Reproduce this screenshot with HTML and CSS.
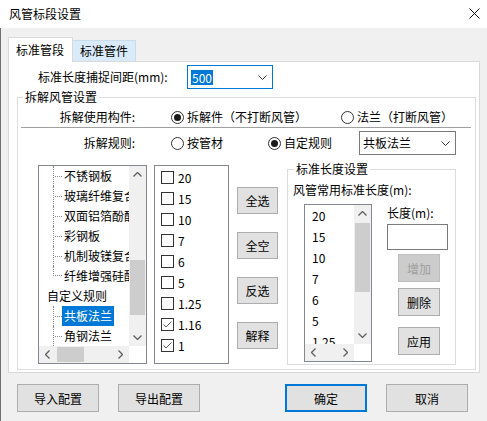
FILE: index.html
```html
<!DOCTYPE html>
<html lang="zh-CN">
<head>
    <meta charset="UTF-8">
    <title>风管标段设置</title>
    <link rel="stylesheet" href="styles.css">
</head>
<body>
<div class="window">
    <div class="titlebar">
        <span class="title">风管标段设置</span>
        <svg class="close" width="11" height="11" viewBox="0 0 11 11"><path d="M0.5 0.5L10.5 10.5M10.5 0.5L0.5 10.5" stroke="#111" stroke-width="1"/></svg>
    </div>
    <div class="client">
        <div class="tabs">
            <div class="tab active">标准管段</div>
            <div class="tab">标准管件</div>
        </div>
        <div class="panel">
            <div class="snap-row">
                <label class="snap-label">标准长度捕捉间距(mm):</label>
                <div class="combo focus">
                    <span class="sel">500</span>
                    <svg class="chev" width="9" height="5" viewBox="0 0 9 5"><path d="M0.5 0.5L4.5 4.5L8.5 0.5" fill="none" stroke="#333"/></svg>
                </div>
            </div>

            <fieldset class="group main-group">
                <legend>拆解风管设置</legend>
                <div class="opt-row">
                    <span class="opt-label">拆解使用构件:</span>
                    <span class="radio-item w170"><span class="radio on"></span>拆解件（不打断风管）</span>
                    <span class="radio-item"><span class="radio"></span>法兰（打断风管）</span>
                </div>
                <div class="separator"></div>
                <div class="opt-row rule-row">
                    <span class="opt-label">拆解规则:</span>
                    <span class="radio-item w97"><span class="radio"></span>按管材</span>
                    <span class="radio-item w91"><span class="radio on"></span>自定规则</span>
                    <div class="combo rule-combo">
                        <span>共板法兰</span>
                        <svg class="chev" width="9" height="5" viewBox="0 0 9 5"><path d="M0.5 0.5L4.5 4.5L8.5 0.5" fill="none" stroke="#333"/></svg>
                    </div>
                </div>

                <div class="work">
                    <div class="tree box">
                        <div class="tree-body">
                            <div class="tree-items">
                                <div class="node child"><span class="guide"></span><span class="txt">不锈钢板</span></div>
                                <div class="node child"><span class="guide"></span><span class="txt">玻璃纤维复合风管</span></div>
                                <div class="node child"><span class="guide"></span><span class="txt">双面铝箔酚醛风管</span></div>
                                <div class="node child"><span class="guide"></span><span class="txt">彩钢板</span></div>
                                <div class="node child"><span class="guide"></span><span class="txt">机制玻镁复合风管</span></div>
                                <div class="node child last"><span class="guide"></span><span class="txt">纤维增强硅酸盐风管</span></div>
                                <div class="node root"><span class="txt">自定义规则</span></div>
                                <div class="node child"><span class="guide"></span><span class="txt picked">共板法兰</span></div>
                                <div class="node child"><span class="guide"></span><span class="txt">角钢法兰</span></div>
                            </div>
                            <div class="vscroll">
                                <svg class="arrow" width="9" height="5" viewBox="0 0 9 5"><path d="M0.5 4.5L4.5 0.5L8.5 4.5" fill="none" stroke="#606060" stroke-width="1.3"/></svg>
                                <div class="track tree-track"><div class="thumb"></div></div>
                                <svg class="arrow" width="9" height="5" viewBox="0 0 9 5"><path d="M0.5 0.5L4.5 4.5L8.5 0.5" fill="none" stroke="#606060" stroke-width="1.3"/></svg>
                            </div>
                        </div>
                        <div class="hscroll-row">
                            <div class="hscroll">
                                <svg class="arrow" width="5" height="9" viewBox="0 0 5 9"><path d="M4.5 0.5L0.5 4.5L4.5 8.5" fill="none" stroke="#606060" stroke-width="1.3"/></svg>
                                <div class="htrack"><div class="hthumb"></div></div>
                                <svg class="arrow" width="5" height="9" viewBox="0 0 5 9"><path d="M0.5 0.5L4.5 4.5L0.5 8.5" fill="none" stroke="#606060" stroke-width="1.3"/></svg>
                            </div>
                            <div class="corner"></div>
                        </div>
                    </div>

                    <div class="checklist box">
                        <div class="check-item"><span class="check"></span>20</div>
                        <div class="check-item"><span class="check"></span>15</div>
                        <div class="check-item"><span class="check"></span>10</div>
                        <div class="check-item"><span class="check"></span>7</div>
                        <div class="check-item"><span class="check"></span>6</div>
                        <div class="check-item"><span class="check"></span>5</div>
                        <div class="check-item"><span class="check"></span>1.25</div>
                        <div class="check-item"><span class="check"><svg width="11" height="11" viewBox="0 0 11 11"><path d="M1.5 5.5L4 8L9.5 2.5" fill="none" stroke="#5a5a5a"/></svg></span>1.16</div>
                        <div class="check-item"><span class="check"><svg width="11" height="11" viewBox="0 0 11 11"><path d="M1.5 5.5L4 8L9.5 2.5" fill="none" stroke="#5a5a5a"/></svg></span>1</div>
                    </div>

                    <div class="btn-col">
                        <button class="btn small">全选</button>
                        <button class="btn small">全空</button>
                        <button class="btn small">反选</button>
                        <button class="btn small">解释</button>
                    </div>

                    <fieldset class="group len-group">
                        <legend>标准长度设置</legend>
                        <div class="len-title">风管常用标准长度(m):</div>
                        <div class="len-body">
                            <div class="listbox box">
                                <div class="list-body">
                                    <div class="list-items">
                                        <div class="list-item">20</div>
                                        <div class="list-item">15</div>
                                        <div class="list-item">10</div>
                                        <div class="list-item">7</div>
                                        <div class="list-item">6</div>
                                        <div class="list-item">5</div>
                                        <div class="list-item">1.25</div>
                                    </div>
                                    <div class="vscroll">
                                        <svg class="arrow" width="9" height="5" viewBox="0 0 9 5"><path d="M0.5 4.5L4.5 0.5L8.5 4.5" fill="none" stroke="#606060" stroke-width="1.3"/></svg>
                                        <div class="track list-track"><div class="thumb"></div></div>
                                        <svg class="arrow" width="9" height="5" viewBox="0 0 9 5"><path d="M0.5 0.5L4.5 4.5L8.5 0.5" fill="none" stroke="#606060" stroke-width="1.3"/></svg>
                                    </div>
                                </div>
                                <div class="hscroll-row">
                                    <div class="hscroll">
                                        <svg class="arrow" width="5" height="9" viewBox="0 0 5 9"><path d="M4.5 0.5L0.5 4.5L4.5 8.5" fill="none" stroke="#606060" stroke-width="1.3"/></svg>
                                        <div class="htrack"></div>
                                        <svg class="arrow" width="5" height="9" viewBox="0 0 5 9"><path d="M0.5 0.5L4.5 4.5L0.5 8.5" fill="none" stroke="#606060" stroke-width="1.3"/></svg>
                                    </div>
                                    <div class="corner"></div>
                                </div>
                            </div>
                            <div class="len-side">
                                <div class="len-label">长度(m):</div>
                                <div class="textbox"></div>
                                <button class="btn side disabled">增加</button>
                                <button class="btn side del">删除</button>
                                <button class="btn side apply">应用</button>
                            </div>
                        </div>
                    </fieldset>
                </div>
            </fieldset>
        </div>

        <div class="footer">
            <button class="btn wide">导入配置</button>
            <button class="btn wide">导出配置</button>
            <button class="btn wide default">确定</button>
            <button class="btn wide">取消</button>
        </div>
    </div>
</div>
</body>
</html>
```

FILE: styles.css
```css
html, body {
    margin: 0;
    padding: 0;
}
body {
    width: 487px;
    height: 421px;
    overflow: hidden;
    background: #f0f0f0;
    font-family: "Noto Sans CJK SC", "Noto Sans", sans-serif;
    font-size: 12px;
    line-height: 16px;
    color: #000;
}
.window {
    height: 421px;
}
.titlebar {
    height: 28px;
    background: #ffffff;
    display: flex;
    align-items: center;
    padding-left: 9px;
    padding-right: 7px;
    box-sizing: border-box;
}
.title {
    flex: 1;
    font-size: 12px;
    margin-top: -1px;
}
.close {
    margin-top: -2px;
}
.client {
    height: 393px;
    border-left: 1px solid #707070;
    box-sizing: border-box;
    padding-top: 9px;
    padding-left: 7px;
}

/* tabs */
.tabs {
    display: flex;
    align-items: flex-end;
    height: 24px;
}
.tab {
    height: 21px;
    box-sizing: border-box;
    padding: 0 7px;
    line-height: 20px;
    background: #d9eaf9;
    border: 1px solid #c8dcee;
    border-bottom: none;
    border-left: none;
}
.tab.active {
    position: relative;
    z-index: 1;
    height: 25px;
    margin-bottom: -1px;
    padding: 2px 8px 0 7px;
    background: #ffffff;
    border: 1px solid #d9d9d9;
    border-bottom: none;
    line-height: 20px;
}
.panel {
    width: 472px;
    height: 312px;
    box-sizing: border-box;
    background: #ffffff;
    border: 1px solid #d9d9d9;
    padding-top: 3px;
}

/* first row */
.snap-row {
    display: flex;
    align-items: center;
    padding-left: 29px;
}
.snap-label {
    width: 149px;
}
.combo {
    height: 24px;
    box-sizing: border-box;
    border: 1px solid #7a7a7a;
    background: #fff;
    display: flex;
    align-items: center;
    padding-left: 3px;
    padding-right: 4px;
}
.combo > span {
    flex: 1;
}
.combo.focus {
    width: 86px;
    border-color: #0078d7;
}
.combo .sel {
    flex: none;
    background: #0078d7;
    color: #fff;
    padding: 0 1px;
    line-height: 15px;
    margin-right: auto;
}
.chev {
    flex: none;
    margin-right: 1px;
}

/* group boxes */
.group {
    margin: 0;
    padding: 0;
    min-width: 0;
    border: 1px solid #dcdcdc;
}
.group legend {
    padding: 0 2px;
    line-height: 16px;
}
.main-group {
    margin: 0 3px 0 8px;
    height: 281px;
    box-sizing: border-box;
    padding-top: 2px;
}
.main-group > legend {
    margin-left: 5px;
}
.opt-row {
    display: flex;
    align-items: center;
    height: 20px;
}
.opt-label {
    width: 117px;
    text-align: right;
    margin-right: 36px;
}
.radio-item {
    display: flex;
    align-items: center;
}
.w170 { width: 170px; }
.w97 { width: 97px; }
.w91 { width: 91px; }
.radio {
    width: 13px;
    height: 13px;
    box-sizing: border-box;
    border: 1px solid #333;
    border-radius: 50%;
    margin-right: 3px;
    display: flex;
    align-items: center;
    justify-content: center;
    background: #fff;
}
.radio.on::after {
    content: "";
    width: 7px;
    height: 7px;
    border-radius: 50%;
    background: #1a1a1a;
}
.separator {
    height: 1px;
    background: #a0a0a0;
    margin: 0 4px 0 3px;
}
.rule-row {
    height: 24px;
    margin-top: 3px;
}
.rule-combo {
    width: 97px;
}

/* work area */
.work {
    display: flex;
    align-items: flex-start;
    margin-top: 10px;
    padding-left: 20px;
}
.box {
    border: 1px solid #828790;
    background: #fff;
    box-sizing: border-box;
}
.tree {
    width: 109px;
    height: 199px;
    display: flex;
    flex-direction: column;
}
.tree-body, .list-body {
    flex: 1;
    display: flex;
    min-height: 0;
}
.tree-items, .list-items {
    flex: 1;
    overflow: hidden;
    min-width: 0;
}
.node {
    height: 20px;
    display: flex;
    align-items: center;
    white-space: nowrap;
}
.node.root {
    padding-left: 6px;
}
.node.child {
    padding-left: 14px;
}
.guide {
    flex: none;
    width: 9px;
    height: 20px;
    box-sizing: border-box;
    border-left: 1px dotted #8a8a8a;
    display: flex;
    align-items: center;
}
.guide::after {
    content: "";
    width: 8px;
    border-top: 1px dotted #8a8a8a;
    margin-left: 1px;
}
.node.last .guide {
    height: 10px;
    align-self: flex-start;
    align-items: flex-end;
}
.txt {
    padding: 0 2px;
    line-height: 20px;
}
.txt.picked {
    background: #0078d7;
    color: #fff;
}
.vscroll {
    width: 17px;
    background: #f0f0f0;
    display: flex;
    flex-direction: column;
    align-items: center;
    flex: none;
}
.vscroll .arrow {
    margin: 6px 0;
    flex: none;
}
.track {
    flex: 1;
    width: 100%;
    display: flex;
    flex-direction: column;
}
.thumb {
    background: #cdcdcd;
    margin: 0 1px;
}
.tree-track .thumb {
    margin-top: 77px;
    height: 55px;
}
.list-track .thumb {
    margin-top: 1px;
    height: 69px;
}
.hscroll-row {
    height: 17px;
    display: flex;
    flex: none;
}
.hscroll {
    flex: 1;
    background: #f0f0f0;
    display: flex;
    align-items: center;
}
.hscroll .arrow {
    margin: 0 6px;
    flex: none;
}
.htrack {
    flex: 1;
    height: 15px;
    display: flex;
}
.hthumb {
    width: 27px;
    background: #cdcdcd;
    margin-left: 1px;
}
.corner {
    width: 17px;
    background: #fff;
}

/* checked list */
.checklist {
    width: 75px;
    height: 199px;
    margin-left: 7px;
    padding-top: 1px;
}
.check-item {
    height: 21px;
    display: flex;
    align-items: center;
    padding-left: 6px;
}
.check {
    width: 13px;
    height: 13px;
    box-sizing: border-box;
    border: 1px solid #333;
    background: #fff;
    margin-right: 4px;
    display: flex;
}

/* buttons */
.btn {
    font-family: inherit;
    font-size: 12px;
    color: #000;
    background: #e1e1e1;
    border: 1px solid #adadad;
    padding: 0;
    margin: 0;
    box-sizing: border-box;
}
.btn-col {
    display: flex;
    flex-direction: column;
    gap: 18px;
    margin-left: 8px;
    margin-top: 22px;
}
.btn.small {
    width: 41px;
    height: 27px;
}

/* length group */
.len-group {
    width: 169px;
    height: 204px;
    box-sizing: border-box;
    margin-left: 9px;
    margin-top: -4px;
    padding-left: 5px;
}
.len-group > legend {
    margin-left: 1px;
}
.len-title {
    padding-top: 5px;
    line-height: 16px;
}
.len-body {
    display: flex;
    align-items: flex-start;
    margin-top: 6px;
}
.listbox {
    width: 68px;
    height: 158px;
    margin-left: 11px;
    display: flex;
    flex-direction: column;
}
.list-item {
    height: 21px;
    line-height: 21px;
    padding-left: 7px;
}
.len-side {
    margin-left: 15px;
    display: flex;
    flex-direction: column;
    align-items: flex-start;
    padding-top: 1px;
}
.len-label {
    line-height: 16px;
}
.textbox {
    width: 61px;
    height: 26px;
    box-sizing: border-box;
    border: 1px solid #7a7a7a;
    background: #fff;
    margin-top: 3px;
}
.btn.side {
    width: 42px;
    height: 28px;
    margin-left: 11px;
    margin-top: 4px;
}
.btn.side.del {
    margin-top: 6px;
}
.btn.side.apply {
    margin-top: 11px;
}
.btn.disabled {
    background: #cccccc;
    border-color: #bfbfbf;
    color: #a0a0a0;
}

/* footer */
.footer {
    display: flex;
    margin-top: 11px;
    padding-left: 9px;
}
.btn.wide {
    width: 86px;
    height: 28px;
    margin-right: 19px;
}
.btn.wide.default {
    margin-left: 66px;
    border: 2px solid #0078d7;
}
```
